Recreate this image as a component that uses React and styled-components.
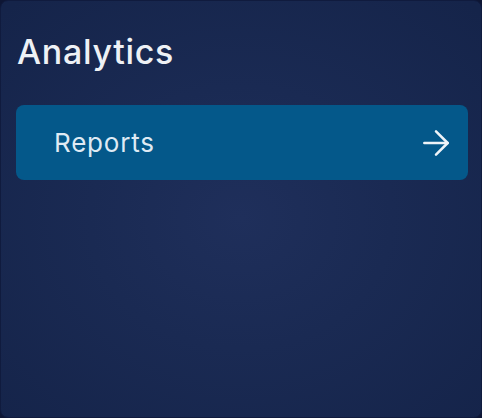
import React from 'react';
import styled, { createGlobalStyle } from 'styled-components';
import { ArrowRight } from 'lucide-react';

const GlobalStyle = createGlobalStyle`
  html, body {
    margin: 0;
    padding: 0;
    background: #0e1634;
  }
  body {
    font-family: Inter, "Noto Sans", "Liberation Sans", sans-serif;
  }
`;

const Card = styled.div`
  box-sizing: border-box;
  display: flex;
  flex-direction: column;
  width: 482px;
  height: 418px;
  padding: 16px 13px 16px 15px;
  border-radius: 8px;
  border: 1px solid #101b3e;
  background: radial-gradient(
    ellipse 70% 70% at 50% 52%,
    #1f2f5b 0%,
    #1a2a53 45%,
    #15244a 100%
  );
`;

const Title = styled.h2`
  margin: 16px 0 0 1px;
  font-size: 34px;
  font-weight: 500;
  line-height: 38px;
  color: #eef1f5;
  letter-spacing: 0.7px;
`;

const LinkRow = styled.a`
  display: flex;
  align-items: center;
  justify-content: space-between;
  height: 75px;
  margin-top: 34px;
  padding: 0 12px 0 38px;
  border-radius: 8px;
  background: #04588a;
  color: #dfeaf4;
  text-decoration: none;
  font-size: 26px;
  font-weight: 400;
  letter-spacing: 0.8px;
  cursor: pointer;
`;

const Label = styled.span`
  line-height: 29px;
`;

const App = () => {
  return (
    <>
      <GlobalStyle />
      <Card>
        <Title>Analytics</Title>
        <LinkRow>
          <Label>Reports</Label>
          <ArrowRight size={40} strokeWidth={1.5} color="#eef3f8" />
        </LinkRow>
      </Card>
    </>
  );
};

export default App;
